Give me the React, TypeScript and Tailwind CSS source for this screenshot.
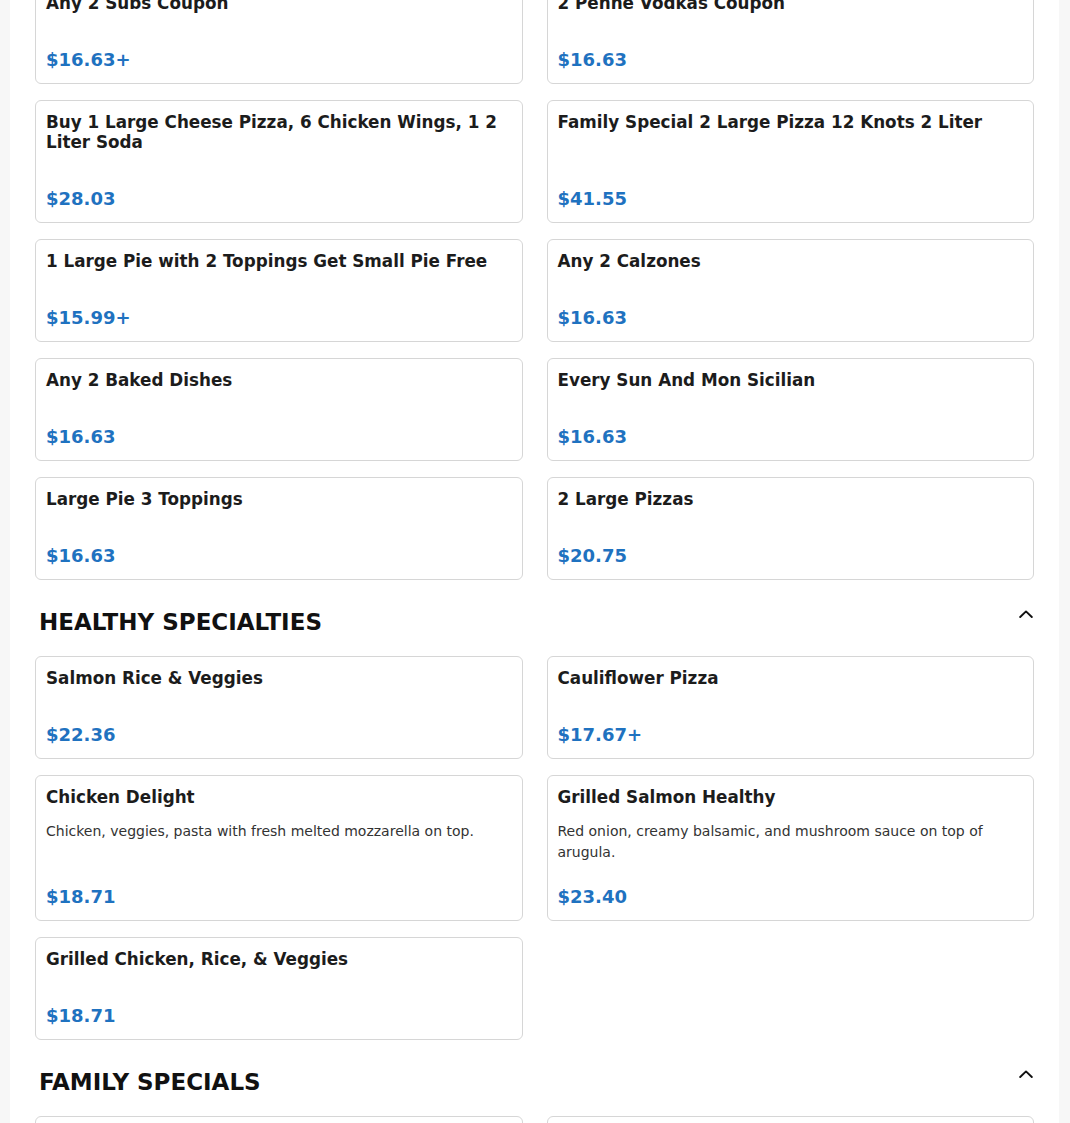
import React from "react";

type Item = { name: string; price: string; desc?: string };

const sections: { title?: string; items: Item[] }[] = [
  {
    items: [
      { name: "Any 2 Subs Coupon", price: "$16.63+" },
      { name: "2 Penne Vodkas Coupon", price: "$16.63" },
      { name: "Buy 1 Large Cheese Pizza, 6 Chicken Wings, 1 2 Liter Soda", price: "$28.03" },
      { name: "Family Special 2 Large Pizza 12 Knots 2 Liter", price: "$41.55" },
      { name: "1 Large Pie with 2 Toppings Get Small Pie Free", price: "$15.99+" },
      { name: "Any 2 Calzones", price: "$16.63" },
      { name: "Any 2 Baked Dishes", price: "$16.63" },
      { name: "Every Sun And Mon Sicilian", price: "$16.63" },
      { name: "Large Pie 3 Toppings", price: "$16.63" },
      { name: "2 Large Pizzas", price: "$20.75" },
    ],
  },
  {
    title: "HEALTHY SPECIALTIES",
    items: [
      { name: "Salmon Rice & Veggies", price: "$22.36" },
      { name: "Cauliflower Pizza", price: "$17.67+" },
      {
        name: "Chicken Delight",
        price: "$18.71",
        desc: "Chicken, veggies, pasta with fresh melted mozzarella on top.",
      },
      {
        name: "Grilled Salmon Healthy",
        price: "$23.40",
        desc: "Red onion, creamy balsamic, and mushroom sauce on top of arugula.",
      },
      { name: "Grilled Chicken, Rice, & Veggies", price: "$18.71" },
    ],
  },
  {
    title: "FAMILY SPECIALS",
    items: [
      { name: "Family Special 1", price: "$45.99" },
      { name: "Family Special 2", price: "$55.99" },
    ],
  },
];

function Card({ item }: { item: Item }) {
  return (
    <div className="flex flex-col rounded-[6px] border border-[#d6d6d6] bg-white px-[10px] pt-[11px] pb-[10px]">
      <div className="mb-[13px] text-[16.8px] leading-[20px] font-bold text-[#1c1c1c]">{item.name}</div>
      {item.desc && (
        <div className="pt-[1px] text-[14px] leading-[21px] text-[#333333]">{item.desc}</div>
      )}
      <div className="mt-auto pt-[20px] text-[18px] leading-[27px] font-bold text-[#1f72c0]">
        {item.price}
      </div>
    </div>
  );
}

function Chevron() {
  return (
    <svg width="14" height="8" viewBox="0 0 14 8" className="mt-[5px] mr-[1px] shrink-0">
      <path d="M1.2 7 L7 1.4 L12.8 7" fill="none" stroke="#111" strokeWidth="1.9" strokeLinecap="round" strokeLinejoin="round" />
    </svg>
  );
}

export default function App() {
  return (
    <div className="min-h-screen overflow-hidden bg-[#f7f7f7]" style={{ fontFamily: '"DejaVu Sans", Verdana, sans-serif' }}>
      <div className="ml-[10px] mr-[11px] min-h-screen bg-white px-[25px]">
        <div className="-mt-[19px]">
          {sections.map((s, i) => (
            <div key={i}>
              {s.title && (
                <div className="mt-[25px] mb-[17px] flex items-start justify-between pl-1">
                  <h2 className="text-[23px] leading-[34px] font-bold text-[#111]">{s.title}</h2>
                  <Chevron />
                </div>
              )}
              <div className="grid grid-cols-2 gap-x-6 gap-y-4">
                {s.items.map((it, j) => (
                  <Card key={j} item={it} />
                ))}
              </div>
            </div>
          ))}
        </div>
      </div>
    </div>
  );
}
